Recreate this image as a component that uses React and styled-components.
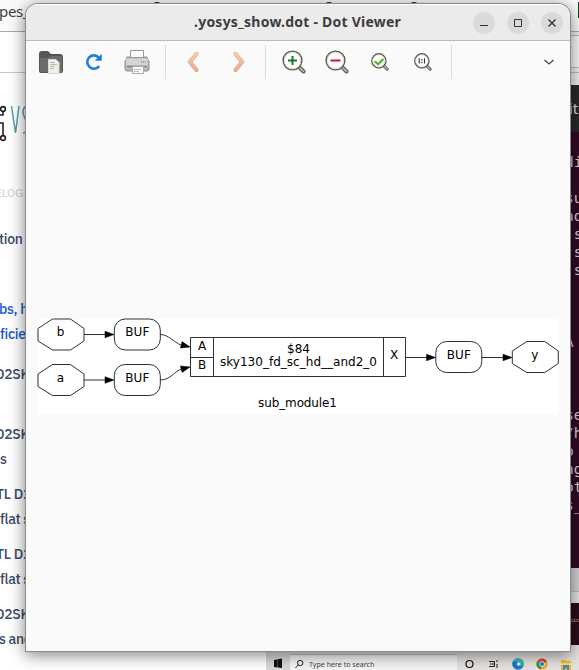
import React from "react";
import styled, { createGlobalStyle } from "styled-components";

const GlobalStyle = createGlobalStyle`
  body { margin: 0; overflow: hidden; }
  * { box-sizing: border-box; }
`;

const Desktop = styled.main`
  position: relative;
  width: 579px;
  height: 670px;
  overflow: hidden;
  background: #fff;
  font-family: "Noto Sans", sans-serif;
`;

const Backdrop = styled.div`
  display: grid;
  grid-template-columns: 1fr 13px;
  grid-template-rows: 32px 613px 25px;
  height: 670px;
`;

const TabStrip = styled.header`
  grid-column: 1 / 3;
  display: flex;
  background: #fafafa;
  border-bottom: 1px solid #aaa;
  font-size: 15px;
  line-height: 22px;
  color: #404040;
  overflow: hidden;
`;

const TabTitle = styled.span`
  width: 153px;
  margin-left: -1px;
  letter-spacing: -0.35px;
`;

const TabDot = styled.i`
  width: 10px;
  height: 10px;
  margin: 2px ${(p) => p.$after}px 0 0;
  border-radius: 50%;
  background: #17192b;
`;

const GreenEdge = styled.i`
  width: 1px;
  height: 16px;
  margin: 2px 0 0 auto;
  background: #123f19;
`;

const Page = styled.section`
  width: 120px;
  overflow: hidden;
  font-family: "IBM Plex Sans", "Noto Sans", sans-serif;
`;

const PageBar = styled.div`
  height: 41px;
  border-bottom: 1px solid #c8c8c8;
`;

const Logo = styled.svg`
  display: block;
  width: 40px;
  height: 42px;
  margin-top: 28px;
`;

const Crumb = styled.div`
  height: 24px;
  margin: 38px 0 22px -5px;
  font-size: 11.5px;
  line-height: 24px;
  color: #d0d0d0;
`;

const Paragraph = styled.div`
  height: ${(p) => p.$lines * 25}px;
  margin-bottom: ${(p) => p.$gap}px;
  color: ${(p) => (p.$link ? "#1457cc" : "#3a4964")};
`;

const PageLine = styled.div`
  height: 25px;
  margin-left: ${(p) => p.$shift}px;
  font-size: 14px;
  line-height: 24px;
  font-weight: 500;
  letter-spacing: -0.3px;
  white-space: nowrap;
`;

const SideColumn = styled.aside`
  display: flex;
  flex-direction: column;
  overflow: hidden;
`;

const BrowserEdge = styled.div`
  height: 53px;
  padding-top: 3px;
  background: #eee;
`;

const AddressEdge = styled.div`
  height: 33px;
  border-top: 1px solid #bbb;
  border-bottom: 1px solid #bbb;
  background: #f7f7f7;
  margin-bottom: 4px;

  & + i {
    display: block;
    height: 1px;
    background: #bbb;
  }
`;

const TerminalTitle = styled.div`
  height: 47px;
  background: #292929;
  color: #ddd;
  font-size: 15px;
  line-height: 47px;
  padding-left: 3px;
`;

const Terminal = styled.div`
  height: 436px;
  padding-top: 21px;
  background: #300a24;
  color: #ded5dc;
  font-family: "DejaVu Sans Mono", monospace;
  font-size: 14.5px;
`;

const TerminalLine = styled.pre`
  height: 18.05px;
  margin: 0 0 0 -1px;
  font: inherit;
  line-height: 18px;
`;

const GreyEdge = styled.div`
  height: 35px;
  background: linear-gradient(#d2d2d2 0 23px, #bbb 23px 24px, #e4e4e4 24px);
`;

const DarkEdge = styled.div`
  flex: 1;
  background: #2a0d1b;
  color: #c9b9c0;
  font: 5px/37px "Liberation Mono", monospace;
  padding-left: 4px;
`;

const Taskbar = styled.footer`
  grid-column: 1 / 3;
  display: flex;
  align-items: flex-end;
  margin-left: 266px;
  background: #e5e1df;
  font-size: 7.1px;
  color: #444;
`;

const StartButton = styled.div`
  display: flex;
  justify-content: center;
  width: 24px;
  height: 16px;
  background: #dbd9d8;
`;

const SearchBox = styled.div`
  display: flex;
  align-items: center;
  gap: 5px;
  width: 167px;
  height: 16px;
  padding: 3px 0 0 5px;
  background: #f5f4f4;
  border-top: 1px solid #bbb;
  white-space: nowrap;
`;

const TaskIcons = styled.div`
  display: flex;
  gap: 12px;
  height: 13px;
  margin-left: 6px;

  svg { flex: none; }
`;

const Viewer = styled.section`
  position: absolute;
  left: 26px;
  top: 4px;
  width: 544px;
  height: 647px;
  display: flex;
  flex-direction: column;
  border-radius: 12px 12px 0 0;
  overflow: hidden;
  background: #fafafa;
`;

const ViewerShadow = styled.div`
  position: absolute;
  left: 26px;
  top: 4px;
  width: 544px;
  height: 647px;
  border-radius: 12px 12px 0 0;
  box-shadow: 0 0 0 1px #888b8b, 0 3px 16px 1px rgba(0, 0, 0, 0.5);
`;

const TitleBar = styled.header`
  display: grid;
  grid-template-columns: 1fr auto;
  align-items: center;
  height: 37px;
  flex: none;
  padding-right: 7px;
  background: #ebebeb;
  border-top: 1px solid #fff;
  border-bottom: 1px solid #bdbdbd;
`;

const WindowTitle = styled.h1`
  margin: 0 0 1px 168px;
  font: bold 14px/20px "Noto Sans", sans-serif;
  letter-spacing: 0.23px;
  white-space: nowrap;
  color: #3d3d3d;
`;

const Controls = styled.div`
  display: flex;
  gap: 12px;
`;

const ControlButton = styled.button`
  width: 22px;
  height: 22px;
  padding: 0;
  border: 0;
  border-radius: 50%;
  background: #dadada;

  svg { display: block; }
`;

const Toolbar = styled.nav`
  display: flex;
  align-items: center;
  height: 42px;
  flex: none;
`;

const Tool = styled.button`
  display: grid;
  place-items: center;
  width: ${(p) => p.$width || 43}px;
  height: 32px;
  margin-left: ${(p) => p.$offset || 0}px;
  padding: 0;
  border: 0;
  background: none;
`;

const Divider = styled.i`
  width: 1px;
  height: 34px;
  margin-left: ${(p) => p.$before}px;
  background: #dcdcdc;
`;

const Canvas = styled.div`
  padding: 236px 0 0 12px;
`;

const Diagram = styled.svg`
  display: block;
  background: #fff;
  overflow: visible;
  font-family: "DejaVu Sans", sans-serif;
  font-size: 12px;
`;

function Magnifier({ size, children }) {
  const rim = size < 20 ? 1.9 : 1.4;
  return (
    <svg width={size} height={size} viewBox="0 0 24 24" fill="none">
      <path d="m17 17 4.5 4.5" stroke="#62635b" strokeWidth="4" strokeLinecap="round" />
      <path d="m17.2 17.2 4 4" stroke="#c7c8bf" strokeWidth="1.5" strokeLinecap="round" />
      <circle cx="10.5" cy="10.5" r="9.4" fill="#fff" stroke="#5b5c55" strokeWidth={rim} />
      <circle cx="10.5" cy="10.5" r="8.1" stroke="#d9d9ca" strokeWidth="1" />
      {children}
    </svg>
  );
}

function FolderIcon() {
  return (
    <svg width="26" height="26" viewBox="0 0 26 26">
      <path d="M1 5q0-3 3-3h6l3 3h9q3 0 3 3v14q0 2-2 2H3q-2 0-2-2z" fill="#555" />
      <path d="M2 9h8l3-2h10q1 0 1 1v14q0 1-1 1H3q-1 0-1-1z" fill="#6c6c6c" />
      <path d="M10.500 10.500h7.500l3 3v11H10.500z" fill="#f1f0eb" stroke="#dad9d5" />
      <path d="M12 13.500h5M12 15.500h7M12 17.500h5M12 19.500h4" stroke="#bab7ad" />
    </svg>
  );
}

function RefreshIcon() {
  return (
    <svg width="20" height="20" viewBox="0 0 18 18" fill="none">
      <path d="M13.400 5A6 6 0 1 0 13.700 12.700" stroke="#1b7fd9" strokeWidth="2.300" />
      <path d="M16 1.500v6.300H9.600z" fill="#1b7fd9" />
    </svg>
  );
}

function PrinterIcon() {
  return (
    <svg width="26" height="26" viewBox="0 0 26 26">
      <path d="M3 8h20l2 5v7q0 2-2 2H3q-2 0-2-2v-7z" fill="#b9b9b9" stroke="#8c8c8c" />
      <path d="M6.500 1.500h13v7h-13z" fill="#fafafa" stroke="#999" />
      <path d="M2 9.500h22v7H2z" fill="#d5d5d5" />
      <path d="M3 17.500h20" stroke="#858585" strokeWidth="1.500" />
      <path d="M17 13h1m1 0h1m1 0h1" stroke="#d0443c" />
      <path d="M8.500 17.500h11v7h-11z" fill="#fafafa" stroke="#aaa" />
      <path d="M10 20.500h7M10 22.500h5" stroke="#bbb" />
    </svg>
  );
}

function Chevron({ flip }) {
  return (
    <svg width="14" height="22" viewBox="0 0 14 22" fill="none">
      <defs>
        <linearGradient id={flip ? "forward" : "backward"} x2="0" y2="1">
          <stop stopColor="#f0cead" />
          <stop offset="1" stopColor="#f2aa91" />
        </linearGradient>
      </defs>
      <path d={flip ? "m3.500 3 6.500 8-6.500 8" : "m10.500 3-6.500 8 6.500 8"} stroke="#dda789" strokeWidth="4.200" strokeLinecap="round" />
      <path d={flip ? "m3.500 3 6.500 8-6.500 8" : "m10.500 3-6.500 8 6.500 8"} stroke={`url(#${flip ? "forward" : "backward"})`} strokeWidth="3" strokeLinecap="round" />
    </svg>
  );
}

const paragraphs = [
  { lines: [["tion", -1]], gap: 45 },
  { lines: [["bs, here", -1], ["ficient", 0]], gap: 15, link: true },
  { lines: [["D2SKY", -5]], gap: 35 },
  { lines: [["D2SKY", -5], ["s", 0]], gap: 10 },
  { lines: [["TL D2S", -4], ["flat sy", 0]], gap: 10 },
  { lines: [["TL D2S", -4], ["flat sy", 0]], gap: 10 },
  { lines: [["D2SKY", -5], ["s and", -1]], gap: 0 },
];

const terminalLines = ["di", "", "su", "no", " s", " s", " s", "", "", "", "A", "", "", "", "se", "/h", "o", "ng", "ot", "s_"];

const octagonPath = "M14.500 0h18l13.500 9.500v12.500l-13.500 9H14.500L0 22V9.500z";

function Port({ x, y, label }) {
  return (
    <g transform={`translate(${x} ${y})`}>
      <path d={octagonPath} />
      <text x="22.5" y="17">{label}</text>
    </g>
  );
}

function Buffer({ x, y }) {
  return (
    <g transform={`translate(${x} ${y})`}>
      <rect width="46" height="31" rx="11" />
      <text x="23" y="17" textLength="24">BUF</text>
    </g>
  );
}

function Arrow({ d, x, y, angle = 0 }) {
  return (
    <>
      <path d={d} />
      <path d="M0 0-9-3.300v6.600z" fill="#000" stroke="#000" strokeWidth="0.5" transform={`translate(${x} ${y}) rotate(${angle})`} />
    </>
  );
}

const Shapes = styled.g`
  fill: none;
  stroke: #303030;

  text {
    fill: #000;
    stroke: none;
    text-anchor: middle;
  }
`;

function Netlist() {
  return (
    <Diagram width="521" height="96" viewBox="0 0 521 96">
      <Shapes>
        <Port x={0} y={0} label="b" />
        <Port x={0} y={45.5} label="a" />
        <Port x={474.3} y={22.5} label="y" />
        <Buffer x={76.3} y={0} />
        <Buffer x={76.3} y={45.5} />
        <Buffer x={397.8} y={22.5} />
        <Arrow d="M46 15.500h22" x={76} y={15.5} />
        <Arrow d="M46 61h22" x={76} y={61} />
        <Arrow d="M122 15.500c9 0 12 7 22 11" x={152} y={28} angle={14} />
        <Arrow d="M122 61c11 0 14-9 22-11" x={152} y={48} angle={-14} />
        <Arrow d="M367 38.500h22" x={397.5} y={38.5} />
        <Arrow d="M443.500 38.500h22" x={474} y={38.5} />
        <path d="M152.500 18.500h215v39h-215zM175.500 18.500v39M345.500 18.500v39M152.500 38.500h23" />
        <text x="164" y="31">A</text>
        <text x="164" y="50">B</text>
        <text x="260.500" y="34" textLength="23">$84</text>
        <text x="260.500" y="47" textLength="157">sky130_fd_sc_hd__and2_0</text>
        <text x="356" y="40">X</text>
        <text x="259.500" y="88" textLength="79">sub_module1</text>
      </Shapes>
    </Diagram>
  );
}

export default function App() {
  return (
    <Desktop>
      <GlobalStyle />
      <Backdrop>
        <TabStrip>
          <TabTitle>pes_</TabTitle>
          <TabDot $after={162} />
          <TabDot $after={75} />
          <TabDot $after={0} />
          <GreenEdge />
        </TabStrip>
        <Page>
          <PageBar />
          <Logo viewBox="0 0 40 42" fill="none">
            <g stroke="#222" strokeWidth="1.600">
              <circle cx="3" cy="8" r="2.400" />
              <path d="M0 14h3v-4M0 22h3v13" />
              <circle cx="3" cy="37" r="2.400" />
            </g>
            <path d="m11.500 5 4 27 3.500-27M28 5c-5 0-6 6-4 10s6 17-1 17" stroke="#5a97b2" strokeWidth="1.500" />
          </Logo>
          <Crumb>ELOG</Crumb>
          {paragraphs.map((p, i) => (
            <Paragraph key={i} $lines={p.lines.length} $gap={p.gap} $link={p.link}>
              {p.lines.map(([text, shift]) => <PageLine key={text} $shift={shift}>{text}</PageLine>)}
            </Paragraph>
          ))}
        </Page>
        <SideColumn>
          <BrowserEdge><AddressEdge /><i /></BrowserEdge>
          <TerminalTitle>it</TerminalTitle>
          <Terminal>
            {terminalLines.map((line, i) => <TerminalLine key={i}>{line}</TerminalLine>)}
          </Terminal>
          <GreyEdge />
          <DarkEdge>pic</DarkEdge>
        </SideColumn>
        <Taskbar>
          <StartButton>
            <svg width="8" height="14" viewBox="0 0 8 14"><path d="M0 6l3.700-.7v4.200H0zm4-.8L8 4.500v5H4zM0 9.500h3.700v4L0 13zm4 0h4v4.500l-4-.5z" fill="#111" /></svg>
          </StartButton>
          <SearchBox>
            <svg width="9" height="11" viewBox="0 0 9 11" fill="none" stroke="#222"><circle cx="5.200" cy="4" r="2.700" /><path d="M3.200 6 .5 9" /></svg>
            Type here to search
          </SearchBox>
          <TaskIcons>
            <svg width="13" height="13" viewBox="0 0 13 13" fill="none"><circle cx="6.500" cy="7" r="3.500" stroke="#111" strokeWidth="1.200" /></svg>
            <svg width="12" height="13" viewBox="0 0 12 13" fill="none" stroke="#222"><path d="M1 4.500h5.500v5H1M2 7h4.500M9 3v2m0 2v4" /></svg>
            <svg width="12" height="13" viewBox="0 0 12 13"><circle cx="6" cy="7" r="5.800" fill="#127acf" /><path d="M.5 5c2-5.500 10.500-4.500 11 1.500 0 3-4 3-5 1 1-2-2-4-6-2.500" fill="#31bba6" /><circle cx="6.600" cy="7" r="1.800" fill="#e5efed" /></svg>
            <svg width="12" height="13" viewBox="0 0 12 13"><circle cx="6" cy="7" r="5.500" fill="#e3af30" /><path d="M6 7 1.200 4.300A5.500 5.500 0 0 1 11 4.700z" fill="#d7472f" /><path d="m6 7-4.800-2.700A5.500 5.500 0 0 0 5 12.400z" fill="#388d48" /><circle cx="6" cy="7" r="2.700" fill="#fff" /><circle cx="6" cy="7" r="2.100" fill="#3978cc" /></svg>
            <svg width="12" height="13" viewBox="0 0 12 13"><path d="M1 3h4l1 1h5v9H1z" fill="#edb735" /><path d="M1 6h10v2H1z" fill="#ffda6b" /><path d="M3 8h6v5H7v-2H5v2H3z" fill="#468cc2" /></svg>
          </TaskIcons>
        </Taskbar>
      </Backdrop>

      <ViewerShadow />
      <Viewer>
        <TitleBar>
          <WindowTitle>.yosys_show.dot - Dot Viewer</WindowTitle>
          <Controls>
            <ControlButton><svg width="22" height="22"><path d="M7 13.500h8" stroke="#333" /></svg></ControlButton>
            <ControlButton><svg width="22" height="22"><path d="M7.500 7.500h7v7h-7z" fill="none" stroke="#333" /></svg></ControlButton>
            <ControlButton><svg width="22" height="22"><path d="m7.500 7.500 7 7m0-7-7 7" stroke="#333" strokeWidth="1.400" /></svg></ControlButton>
          </Controls>
        </TitleBar>
        <Toolbar>
          <Tool $offset={4}><FolderIcon /></Tool>
          <Tool><RefreshIcon /></Tool>
          <Tool><PrinterIcon /></Tool>
          <Divider $before={6} />
          <Tool $offset={6} $width={42}><Chevron /></Tool>
          <Tool $offset={4} $width={42}><Chevron flip /></Tool>
          <Divider $before={5} />
          <Tool $offset={7}><Magnifier size={24}><path d="M6 10.500h9M10.500 6v9" stroke="#137c20" strokeWidth="2" /></Magnifier></Tool>
          <Tool><Magnifier size={24}><path d="M5.500 10.500h10" stroke="#c4183d" strokeWidth="2" /></Magnifier></Tool>
          <Tool><Magnifier size={18}><path d="m5 11 4.500 4L16.500 8" stroke="#45b82d" strokeWidth="3" /></Magnifier></Tool>
          <Tool><Magnifier size={18}><path d="M7 7v7M14 7v7M10.500 8v2m0 1.500v2" stroke="#333" strokeWidth="1.500" /></Magnifier></Tool>
          <Divider $before={7} />
          <Tool $offset={75}><svg width="12" height="8" viewBox="0 0 12 8" fill="none"><path d="m1.500 2 4.500 4 4.500-4" stroke="#444" strokeWidth="1.300" /></svg></Tool>
        </Toolbar>
        <Canvas><Netlist /></Canvas>
      </Viewer>
    </Desktop>
  );
}
